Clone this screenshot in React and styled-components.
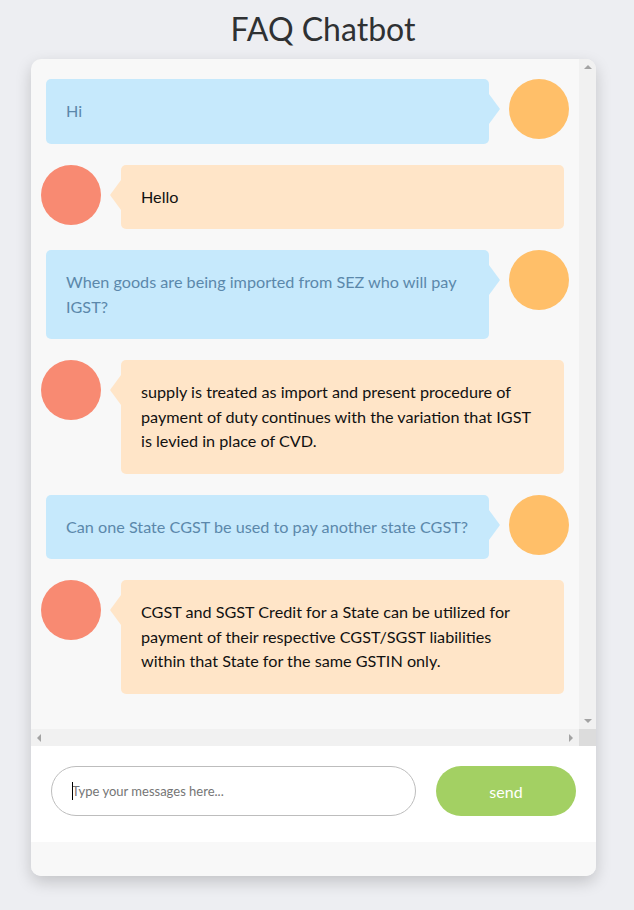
import React from "react";
import styled, { createGlobalStyle, css } from "styled-components";

const GlobalStyle = createGlobalStyle`
  html, body {
    margin: 0;
    padding: 0;
    background: #edeef2;
    font-family: Lato, "Open Sans", sans-serif;
  }
`;

// lines are kept as in the original wrap
const messages = [
  { from: "user", lines: ["Hi"] },
  { from: "bot", lines: ["Hello"] },
  { from: "user", lines: ["When goods are being imported from SEZ who will pay", "IGST?"] },
  {
    from: "bot",
    lines: [
      "supply is treated as import and present procedure of",
      "payment of duty continues with the variation that IGST",
      "is levied in place of CVD.",
    ],
  },
  { from: "user", lines: ["Can one State CGST be used to pay another state CGST?"] },
  {
    from: "bot",
    lines: [
      "CGST and SGST Credit for a State can be utilized for",
      "payment of their respective CGST/SGST liabilities",
      "within that State for the same GSTIN only.",
    ],
  },
];

function App() {
  return (
    <Page>
      <GlobalStyle />
      <Title>FAQ Chatbot</Title>
      <Card>
        <ChatFrame>
          <ChatArea>
            {messages.map((m, i) => {
              const user = m.from === "user" ? 1 : 0;
              return (
                <Row key={i} user={user}>
                  <Avatar user={user} />
                  <Bubble user={user}>
                    {m.lines.map((l, j) => (
                      <Line key={j}>{l}</Line>
                    ))}
                  </Bubble>
                </Row>
              );
            })}
          </ChatArea>
          <VScroll>
            <ScrollBtn><Arrow dir="up" /></ScrollBtn>
            <ScrollBtn><Arrow dir="down" /></ScrollBtn>
          </VScroll>
          <HScroll>
            <ScrollBtn><Arrow dir="left" /></ScrollBtn>
            <ScrollBtn><Arrow dir="right" /></ScrollBtn>
          </HScroll>
          <Corner />
        </ChatFrame>
        <InputBar>
          <InputWrap>
            <Caret />
            <MessageInput placeholder="Type your messages here..." />
          </InputWrap>
          <SendButton>send</SendButton>
        </InputBar>
        <Footer />
      </Card>
    </Page>
  );
}

const Page = styled.div`
  width: 634px;
  min-height: 910px;
  padding-top: 9px;
  box-sizing: border-box;
`;

const Title = styled.h1`
  margin: 0 0 10px 0;
  height: 40px;
  text-align: center;
  font-weight: 400;
  font-size: 32px;
  line-height: 40px;
  color: #2f3133;
  padding-left: 12px;
`;

const Card = styled.div`
  margin-left: 31px;
  width: 565px;
  background: #f8f8f8;
  border-radius: 10px;
  box-shadow: 0 6px 16px rgba(0, 0, 0, 0.18);
  overflow: hidden;
`;

const ChatFrame = styled.div`
  display: grid;
  grid-template-columns: 1fr 17px;
  grid-template-rows: 670px 17px;
`;

const ChatArea = styled.div`
  overflow: hidden;
  padding: 20px 10px 0 10px;
`;

const VScroll = styled.div`
  background: #f1f1f1;
  display: flex;
  flex-direction: column;
  justify-content: space-between;
`;

const HScroll = styled.div`
  background: #f1f1f1;
  display: flex;
  justify-content: space-between;
`;

const Corner = styled.div`
  background: #dcdcdc;
`;

const ScrollBtn = styled.div`
  width: 17px;
  height: 17px;
  display: flex;
  align-items: center;
  justify-content: center;
`;

const arrowColor = "#a3a3a3";

const Arrow = styled.span`
  width: 0;
  height: 0;
  ${(p) =>
    p.dir === "up"
      ? css`
          border-left: 4px solid transparent;
          border-right: 4px solid transparent;
          border-bottom: 4px solid ${arrowColor};
          margin-top: -1px;
        `
      : p.dir === "down"
      ? css`
          border-left: 4px solid transparent;
          border-right: 4px solid transparent;
          border-top: 4px solid ${arrowColor};
          margin-top: 1px;
        `
      : p.dir === "left"
      ? css`
          border-top: 4px solid transparent;
          border-bottom: 4px solid transparent;
          border-right: 4px solid ${arrowColor};
          margin-left: -1px;
        `
      : css`
          border-top: 4px solid transparent;
          border-bottom: 4px solid transparent;
          border-left: 4px solid ${arrowColor};
          margin-left: 1px;
        `}
`;

const Row = styled.div`
  display: flex;
  flex-direction: ${(p) => (p.user ? "row-reverse" : "row")};
  align-items: flex-start;
  gap: 20px;
  margin-bottom: 21px;
  padding-left: ${(p) => (p.user ? "5px" : "0")};
`;

const Avatar = styled.div`
  flex: none;
  width: 60px;
  height: 60px;
  border-radius: 50%;
  background: ${(p) => (p.user ? "#ffbf69" : "#f88a72")};
`;

const Bubble = styled.div`
  position: relative;
  width: 443px;
  box-sizing: border-box;
  padding: 20px;
  border-radius: 5px;
  font-size: 16.2px;
  line-height: 24.5px;
  background: ${(p) => (p.user ? "#c6e9fc" : "#ffe5c8")};
  color: ${(p) => (p.user ? "#5b88ab" : "#111")};

  &::after {
    content: "";
    position: absolute;
    top: 15px;
    ${(p) => (p.user ? "right: -11px;" : "left: -11px;")}
    border-top: 15px solid transparent;
    border-bottom: 15px solid transparent;
    ${(p) =>
      p.user
        ? "border-left: 11px solid #c6e9fc;"
        : "border-right: 11px solid #ffe5c8;"}
  }
`;

const Line = styled.span`
  display: block;
  white-space: nowrap;
`;

const InputBar = styled.div`
  display: flex;
  align-items: center;
  gap: 20px;
  background: #fff;
  padding: 20px 20px 26px 20px;
`;

const InputWrap = styled.div`
  position: relative;
  flex: 1;
  display: flex;
`;

const Caret = styled.span`
  position: absolute;
  left: 21px;
  top: 16px;
  width: 1px;
  height: 18px;
  background: #000;
`;

const MessageInput = styled.input`
  flex: 1;
  height: 50px;
  box-sizing: border-box;
  border: 1px solid #bdbdbd;
  border-radius: 25px;
  padding: 0 20px;
  font-family: Lato, "Open Sans", sans-serif;
  font-size: 13px;
  outline: none;
  color: #333;
  &::placeholder {
    color: #757575;
  }
`;

const SendButton = styled.button`
  flex: none;
  width: 140px;
  height: 50px;
  border: none;
  border-radius: 25px;
  background: #a3d063;
  color: #fff;
  font-family: Lato, "Open Sans", sans-serif;
  font-size: 16px;
`;

const Footer = styled.div`
  height: 34px;
  background: #f8f8f8;
`;

export default App;
